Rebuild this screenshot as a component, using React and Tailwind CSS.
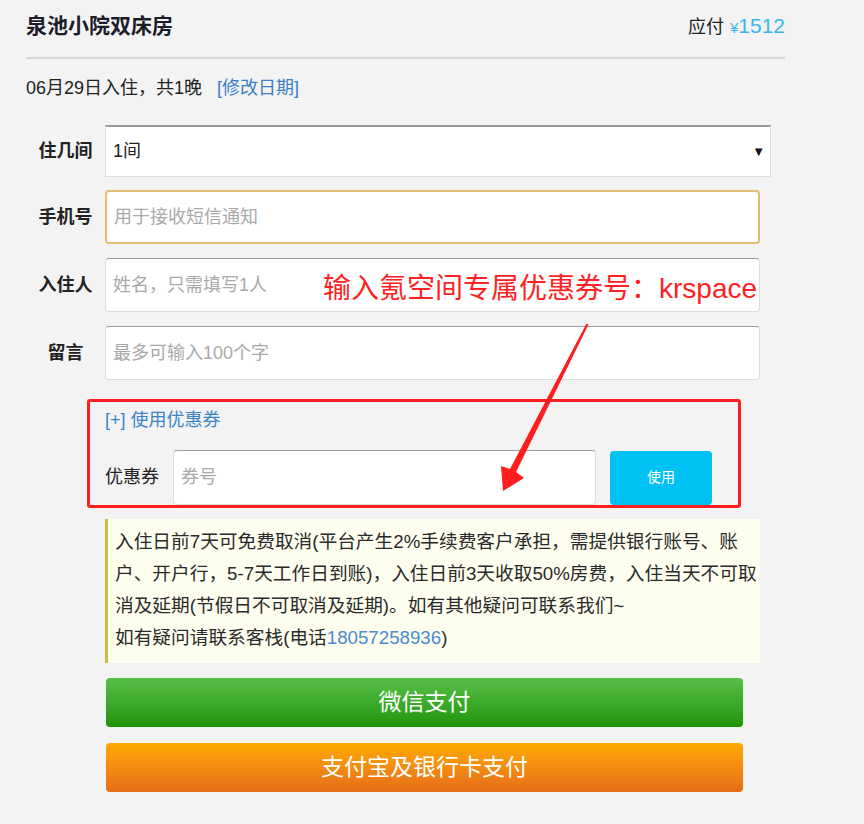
import { useState } from 'react'

// Booking checkout form: room summary, guest details, coupon block and pay buttons.
const FONT = "font-['Liberation_Sans','Noto_Sans_CJK_SC',sans-serif]"

function Row({ label, children, gap = 'mt-[14px]' }) {
  return (
    <div className={`flex items-center ${gap}`}>
      <div className="w-[79px] text-center text-[18px] font-bold text-[#222]">{label}</div>
      {children}
    </div>
  )
}

function Field({ placeholder, focused }) {
  return (
    <input
      placeholder={placeholder}
      className={
        'h-[54px] w-[655px] rounded-[4px] bg-white px-[7px] text-[18px] outline-none placeholder:text-[#a9a9a9] ' +
        (focused
          ? 'border-2 border-[#e5bd70]'
          : 'border border-[#dcdcdc] border-t-[#9c9c9c]')
      }
    />
  )
}

export default function App() {
  const [rooms] = useState('1间')

  return (
    <div className={`relative min-h-[824px] w-[864px] bg-[#f3f3f3] pl-[26px] ${FONT}`}>
      <div className="w-[759px]">
        <div className="flex h-[50px] items-center justify-between pt-[2px]">
          <h1 className="text-[21px] font-semibold text-[#1c1c2a]">泉池小院双床房</h1>
          <div className="flex items-baseline text-[18px] text-[#222]">
            应付
            <span className="ml-[6px] text-[15px] text-[#3ab6ee]">¥</span>
            <span className="text-[21px] text-[#3ab6ee]">1512</span>
          </div>
        </div>
        <div className="mt-[7px] h-[2px] bg-[#d6d6d6]" />
        <div className="mt-[17px] h-[24px] text-[18px] leading-[24px] text-[#222]">
          06月29日入住，共1晚
          <span className="ml-[15px] text-[#3b80c6]">[修改日期]</span>
        </div>

        <Row label="住几间" gap="mt-[25px]">
          <div className="flex h-[52px] w-[666px] items-center justify-between border-x border-b border-t-2 border-[#dcdcdc] border-t-[#9a9a9a] bg-white pl-[7px] pr-[5px]">
            <span className="text-[18px] text-[#222]">{rooms}</span>
            <span className="text-[13px] text-[#111]">▼</span>
          </div>
        </Row>
        <Row label="手机号" gap="mt-[13px]">
          <Field placeholder="用于接收短信通知" focused />
        </Row>
        <Row label="入住人">
          <Field placeholder="姓名，只需填写1人" />
        </Row>
        <Row label="留言">
          <Field placeholder="最多可输入100个字" />
        </Row>

        <div className="ml-[61px] mt-[19px] h-[109px] w-[654px] rounded-[3px] border-[3px] border-[#ff1d1d] pl-[15px] pt-[6px]">
          <div className="h-[24px] text-[18px] leading-[24px] text-[#3b84c7]">[+] 使用优惠券</div>
          <div className="mt-[18px] flex items-center">
            <span className="w-[68px] text-[18px] text-[#222]">优惠券</span>
            <input
              placeholder="券号"
              className="h-[55px] w-[423px] rounded-[4px] border border-[#dcdcdc] border-t-[#9c9c9c] bg-white px-[7px] text-[18px] outline-none placeholder:text-[#a9a9a9]"
            />
            <button className="ml-[14px] h-[54px] w-[102px] rounded-[4px] bg-[#00c1f3] text-[14px] text-white">
              使用
            </button>
          </div>
        </div>

        <div className="ml-[79px] mt-[11px] h-[144px] w-[655px] border-l-[3px] border-[#c9c03f] bg-[#fefeee] pl-[7px] pr-[2px] pt-[7px] text-[18.7px] leading-[32px] text-[#2a2a2a]">
          入住日前7天可免费取消(平台产生2%手续费客户承担，需提供银行账号、账户、开户行，5-7天工作日到账)，入住日前3天收取50%房费，入住当天不可取消及延期(节假日不可取消及延期)。如有其他疑问可联系我们~
          <br />
          如有疑问请联系客栈(电话<span className="text-[#4a8bd0]">18057258936</span>)
        </div>

        <button className="ml-[80px] mt-[15px] block h-[49px] w-[637px] rounded-[4px] bg-gradient-to-b from-[#56c046] to-[#1f9400] text-[23px] text-white">
          微信支付
        </button>
        <button className="ml-[80px] mt-[16px] block h-[49px] w-[637px] rounded-[4px] bg-gradient-to-b from-[#ffaa00] to-[#e56c18] text-[23px] text-white">
          支付宝及银行卡支付
        </button>
      </div>

      {/* annotation overlay */}
      <div className="absolute left-[323px] top-[271px] text-[28px] leading-[36px] text-[#ff2222]">
        输入氪空间专属优惠券号：krspace
      </div>
      <svg className="pointer-events-none absolute left-0 top-0" width="864" height="824">
        <polygon
          points="588.5,324.5 516,472 524,478 503,491 501,466 510,469 586.5,323.5"
          fill="#ff1d1d"
        />
      </svg>
    </div>
  )
}
